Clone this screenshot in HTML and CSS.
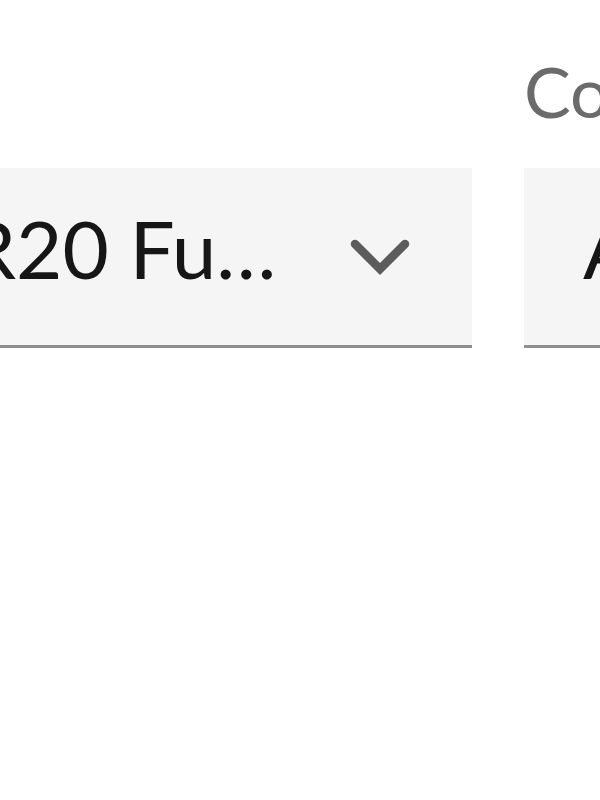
FILE: index.html
```html
<!DOCTYPE html>
<html lang="en">
<head>
<meta charset="utf-8">
<title>Dropdowns</title>
<link rel="stylesheet" href="styles.css">
</head>
<body>
<div class="row">
  <div class="field">
    <div class="label">&nbsp;</div>
    <div class="select first">
      <span class="value">R20 Fu…</span>
      <svg class="chev" width="60" height="36" viewBox="0 0 60 36" aria-hidden="true">
        <polyline points="5,5 30,30 55,5" fill="none" stroke="#5c5c5c" stroke-width="8.5" stroke-linecap="round" stroke-linejoin="miter"/>
      </svg>
    </div>
  </div>
  <div class="field">
    <div class="label">Color</div>
    <div class="select second">
      <span class="value">All</span>
    </div>
  </div>
</div>
</body>
</html>
```
FILE: styles.css
```css
html, body {
  margin: 0;
  padding: 0;
  overflow: hidden;
  background: #ffffff;
  width: 600px;
  height: 800px;
}
body {
  font-family: Lato, "Open Sans", sans-serif;
}
.row {
  display: flex;
  gap: 52px;
  margin-left: -93px;
  padding-top: 49px;
}
.field {
  display: flex;
  flex-direction: column;
  flex: none;
}
.label {
  font-size: 70px;
  line-height: 84px;
  color: #6b6b6b;
  margin-bottom: 35px;
  white-space: nowrap;
}
.select {
  box-sizing: border-box;
  height: 180px;
  background: #f5f5f5;
  border-bottom: 3px solid #8f8f8f;
  display: flex;
  align-items: center;
  justify-content: space-between;
  padding-left: 59px;
  padding-right: 62px;
}
.first {
  width: 565px;
}
.second {
  width: 300px;
}
.value {
  font-size: 80px;
  line-height: 96px;
  color: #161616;
  padding-bottom: 18px;
  white-space: nowrap;
}
.chev {
  display: block;
  flex: none;
}
```
